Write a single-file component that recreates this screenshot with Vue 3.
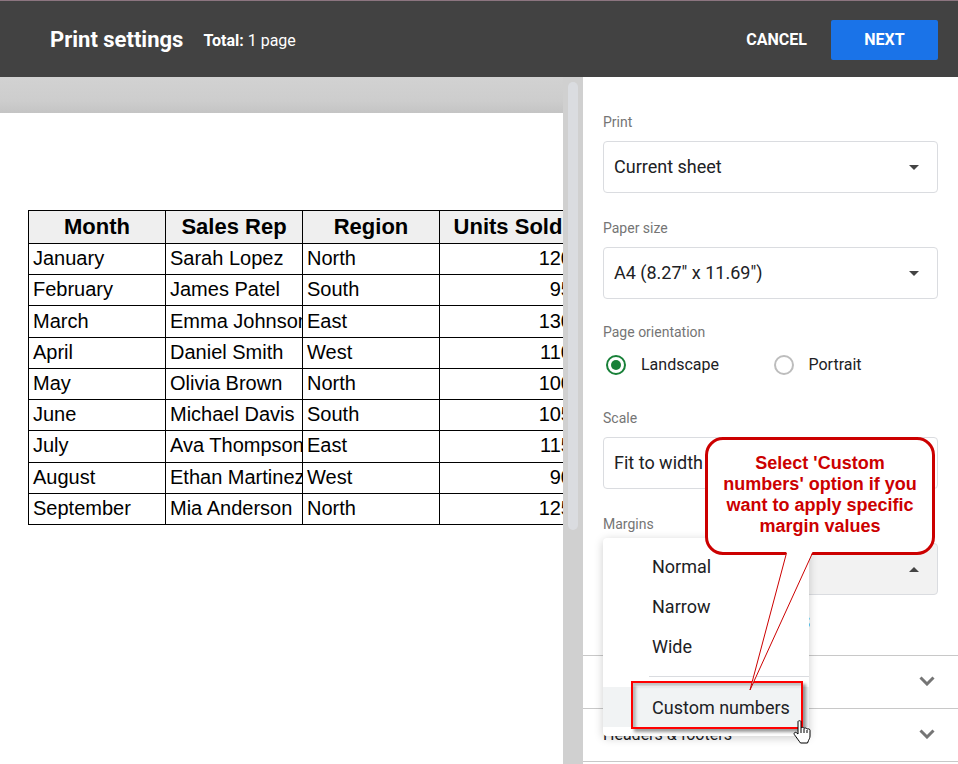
<template>
  <div class="print-page">
    <header class="top-bar">
      <h1 class="title">Print settings</h1>
      <p class="total"><b>Total:</b> 1 page</p>
      <div class="actions">
        <button type="button" class="btn">CANCEL</button>
        <button type="button" class="btn btn-primary">NEXT</button>
      </div>
    </header>

    <div class="content">
      <main class="preview">
        <div class="paper">
          <table class="sheet">
            <thead>
              <tr>
                <th v-for="name in columns" :key="name">{{ name }}</th>
              </tr>
            </thead>
            <tbody>
              <tr v-for="row in rows" :key="row.month">
                <td>{{ row.month }}</td>
                <td>{{ row.rep }}</td>
                <td>{{ row.region }}</td>
                <td class="num">{{ row.units }}</td>
              </tr>
            </tbody>
          </table>
        </div>
      </main>
      <div class="scroll-track"><div class="scroll-thumb"></div></div>

      <aside class="panel">
        <div class="fields">
          <div class="field">
            <label class="label" for="print-range">Print</label>
            <div class="select-box">
              <select id="print-range" v-model="printRange">
                <option>Current sheet</option>
                <option>Workbook</option>
              </select>
              <svg class="arrow" viewBox="0 0 10 5"><path d="M0 0h10L5 5z" /></svg>
            </div>
          </div>

          <div class="field">
            <label class="label" for="paper-size">Paper size</label>
            <div class="select-box">
              <select id="paper-size" v-model="paperSize">
                <option>A4 (8.27" x 11.69")</option>
                <option>Letter (8.5" x 11")</option>
              </select>
              <svg class="arrow" viewBox="0 0 10 5"><path d="M0 0h10L5 5z" /></svg>
            </div>
          </div>

          <div class="field orientation" role="radiogroup" aria-labelledby="orientation-label">
            <span id="orientation-label" class="label">Page orientation</span>
            <div class="radios">
              <label v-for="item in orientations" :key="item" class="radio">
                <input type="radio" name="orientation" :value="item" v-model="orientation">
                <span>{{ item }}</span>
              </label>
            </div>
          </div>

          <div class="field">
            <label class="label" for="scale">Scale</label>
            <div class="select-box">
              <select id="scale" v-model="scale">
                <option>Fit to width</option>
                <option>Normal (100%)</option>
              </select>
              <svg class="arrow" viewBox="0 0 10 5"><path d="M0 0h10L5 5z" /></svg>
            </div>
          </div>

          <div class="field margins">
            <label class="label" for="margins">Margins</label>
            <div class="select-box open">
              <select id="margins" v-model="margin">
                <option v-for="item in margins" :key="item">{{ item }}</option>
              </select>
              <svg class="arrow" viewBox="0 0 10 5"><path d="M0 5h10L5 0z" /></svg>
            </div>

            <div class="menu">
              <button v-for="item in margins" :key="item" type="button" class="menu-item" @click="margin = item">{{ item }}</button>
              <div class="menu-line"></div>
              <button type="button" class="menu-item active">
                Custom numbers
                <span class="highlight"></span>
                <svg class="cursor" viewBox="0 0 18 24">
                  <path d="M5 1.5c0-1 3-1 3 0V8c.5-1 3-.8 3 .5.600-.9 2.700-.6 3 .6.900-.6 3-.2 3 1.200V16c0 2-.8 3-1.500 4.500L14.500 23h-7C6 21 3.500 17.500 1.300 14.500c-.8-1.300.700-2.800 2-1.900L5 14z" />
                  <path d="M8 8v5M11 9v4M14 10v3" />
                </svg>
              </button>
            </div>

            <div class="callout">
              <p>Select 'Custom numbers' option if you want to apply specific margin values</p>
              <svg class="tail" viewBox="0 0 64 139">
                <path class="tail-fill" d="M37.500 0L1 138L63.500 0z" />
                <path d="M37.500 1L1 138L63.500 1" />
              </svg>
            </div>
          </div>

          <a href="#" class="breaks">SET CUSTOM PAGE BREAKS</a>
        </div>

        <button v-for="name in sections" :key="name" type="button" class="section">
          <span>{{ name }}</span>
          <svg class="chevron" viewBox="0 0 16 10"><path d="M1.500 1.500L8 8l6.500-6.500" /></svg>
        </button>
        <div class="panel-end"></div>
      </aside>
    </div>
  </div>
</template>

<script setup>
import { ref } from 'vue'

const printRange = ref('Current sheet')
const paperSize = ref('A4 (8.27" x 11.69")')
const orientation = ref('Landscape')
const scale = ref('Fit to width')
const margin = ref('Normal')

const orientations = ['Landscape', 'Portrait']
const margins = ['Normal', 'Narrow', 'Wide']
const sections = ['Formatting', 'Headers & footers']

const columns = ['Month', 'Sales Rep', 'Region', 'Units Sold']
const rows = [
  { month: 'January', rep: 'Sarah Lopez', region: 'North', units: 120 },
  { month: 'February', rep: 'James Patel', region: 'South', units: 95 },
  { month: 'March', rep: 'Emma Johnson', region: 'East', units: 130 },
  { month: 'April', rep: 'Daniel Smith', region: 'West', units: 110 },
  { month: 'May', rep: 'Olivia Brown', region: 'North', units: 100 },
  { month: 'June', rep: 'Michael Davis', region: 'South', units: 105 },
  { month: 'July', rep: 'Ava Thompson', region: 'East', units: 115 },
  { month: 'August', rep: 'Ethan Martinez', region: 'West', units: 90 },
  { month: 'September', rep: 'Mia Anderson', region: 'North', units: 125 }
]
</script>

<style>
body {
  margin: 0;
  overflow: hidden;
}
</style>

<style scoped>
* {
  box-sizing: border-box;
}
.print-page {
  display: flex;
  flex-direction: column;
  height: 100vh;
  font-family: Roboto, "Liberation Sans", sans-serif;
  color: #202124;
}
button,
select {
  font-family: inherit;
  color: inherit;
}

/* header */
.top-bar {
  display: flex;
  flex: none;
  align-items: center;
  height: 77px;
  padding: 2px 20px 0 50px;
  border-top: 1px solid #8c7580;
  background: #424242;
  color: #fff;
}
.title {
  margin: 0 20px 0 0;
  font-size: 22px;
  font-weight: 700;
  line-height: 28px;
}
.total {
  margin: 0;
  font-size: 16px;
}
.total b {
  font-weight: 700;
}
.actions {
  display: flex;
  margin-left: auto;
}
.btn {
  height: 40px;
  padding: 0 24px 2px;
  border: 0;
  border-radius: 2px;
  background: none;
  font-size: 16px;
  font-weight: 700;
}
.btn-primary {
  width: 107px;
  background: #1a73e8;
}

/* sheet preview */
.content {
  display: flex;
  flex: 1;
  min-height: 0;
}
.preview {
  flex: 1;
  min-width: 0;
  padding-top: 36px;
  overflow: hidden;
  background: linear-gradient(#d2d2d2, #cdcdcd 24px, #c4c4c4 36px);
}
.paper {
  height: 100%;
  padding: 97px 0 0 28px;
  background: #fff;
}
.sheet {
  width: 549px;
  height: 315px;
  table-layout: fixed;
  border-collapse: collapse;
  font-family: "Liberation Sans", Arial, sans-serif;
  font-size: 20px;
  line-height: 24px;
  color: #000;
}
.sheet th,
.sheet td {
  padding: 0 4px;
  border: 1px solid #000;
  overflow: hidden;
  text-align: left;
  white-space: nowrap;
}
.sheet td {
  padding-bottom: 2px;
}
.sheet th {
  height: 33px;
  background: #efefef;
  font-size: 22px;
  text-align: center;
}
.sheet .num {
  text-align: right;
}
.scroll-track {
  flex: none;
  width: 20px;
  padding: 5px;
  background: #d0d0d0;
}
.scroll-thumb {
  height: 448px;
  border-radius: 5px;
  background: #dadce0;
}

/* settings panel */
.panel {
  flex: none;
  width: 375px;
  background: #fff;
}
.fields {
  height: 578px;
  padding: 10px 20px 0;
}
.field {
  margin-top: 26px;
}
.label {
  display: block;
  margin-bottom: 10px;
  font-size: 14px;
  line-height: 18px;
  color: #757575;
}
.select-box {
  display: flex;
  align-items: center;
  height: 52px;
  border: 1px solid #dadce0;
  border-radius: 4px;
}
.select-box select {
  flex: 1;
  height: 100%;
  padding: 0 10px 1px;
  border: 0;
  background: none;
  appearance: none;
  font-size: 18px;
}
.select-box.open {
  background: #f2f2f2;
}
.arrow {
  width: 10px;
  height: 5px;
  margin-right: 18px;
  fill: #444;
}
.orientation {
  margin: 24px 0 30px;
}
.radios {
  display: grid;
  grid-template-columns: 1fr 1fr;
  height: 28px;
}
.radio {
  display: flex;
  align-items: center;
  gap: 15px;
  padding-left: 3px;
  font-size: 16px;
}
.radio span {
  padding-bottom: 2px;
}
.radio input {
  display: grid;
  place-items: center;
  width: 20px;
  height: 20px;
  margin: 0;
  border: 2px solid #bdbdbd;
  border-radius: 50%;
  appearance: none;
}
.radio input:checked {
  border-color: #188038;
}
.radio input:checked::before {
  content: "";
  width: 10px;
  height: 10px;
  border-radius: 50%;
  background: #188038;
}
.breaks {
  display: block;
  width: 207px;
  margin-top: 19px;
  font-size: 16px;
  line-height: 18px;
  font-weight: 500;
  text-align: right;
  text-decoration: none;
  white-space: nowrap;
  color: #1a73e8;
}
.section {
  display: flex;
  align-items: center;
  justify-content: space-between;
  width: 100%;
  height: 53px;
  padding: 0 23px 2px 20px;
  border: 0;
  border-top: 1px solid #c8c8c8;
  background: none;
  font-size: 16px;
}
.chevron {
  width: 16px;
  height: 10px;
  fill: none;
  stroke: #757575;
  stroke-width: 3;
}
.panel-end {
  border-top: 1px solid #c8c8c8;
}

/* margins drop-down, opened over the rest of the panel */
.margins {
  position: relative;
}
.menu {
  position: absolute;
  z-index: 1;
  top: 23px;
  left: 0;
  width: 206px;
  padding: 9px 0;
  border-radius: 4px;
  background: #fff;
  box-shadow: 0 2px 10px rgba(0, 0, 0, 0.2);
}
.menu-item {
  display: block;
  position: relative;
  width: 100%;
  height: 40px;
  padding: 0 0 2px 49px;
  border: 0;
  background: none;
  font-size: 18px;
  text-align: left;
}
.menu-item.active {
  padding-bottom: 0;
  background: #f1f3f4;
}
.menu-line {
  margin: 9px 0 10px 46px;
  border-top: 1px solid #dadce0;
}
.highlight {
  position: absolute;
  top: -6px;
  left: 28px;
  width: 172px;
  height: 48px;
  border: 2px solid #f00;
  box-shadow: 3px 3px 3px rgba(0, 0, 0, 0.4), inset 3px 3px 3px rgba(0, 0, 0, 0.25);
}
.cursor {
  position: absolute;
  top: 33px;
  left: 190px;
  width: 18px;
  height: 24px;
  fill: #fff;
  stroke: #000;
}
.callout {
  position: absolute;
  z-index: 2;
  top: -78px;
  right: 3px;
  width: 230px;
  height: 118px;
  padding: 13px 10px;
  border: 3px solid #c00;
  border-radius: 18px;
  background: #fff;
}
.callout p {
  margin: 0;
  font: bold 18px/21px "Liberation Sans", Arial, sans-serif;
  text-align: center;
  color: #c00;
}
.tail {
  position: absolute;
  top: 112px;
  left: 41px;
  width: 64px;
  height: 139px;
  fill: none;
  stroke: #c00;
  pointer-events: none;
}
.tail .tail-fill {
  fill: #fff;
  stroke: none;
}
</style>
